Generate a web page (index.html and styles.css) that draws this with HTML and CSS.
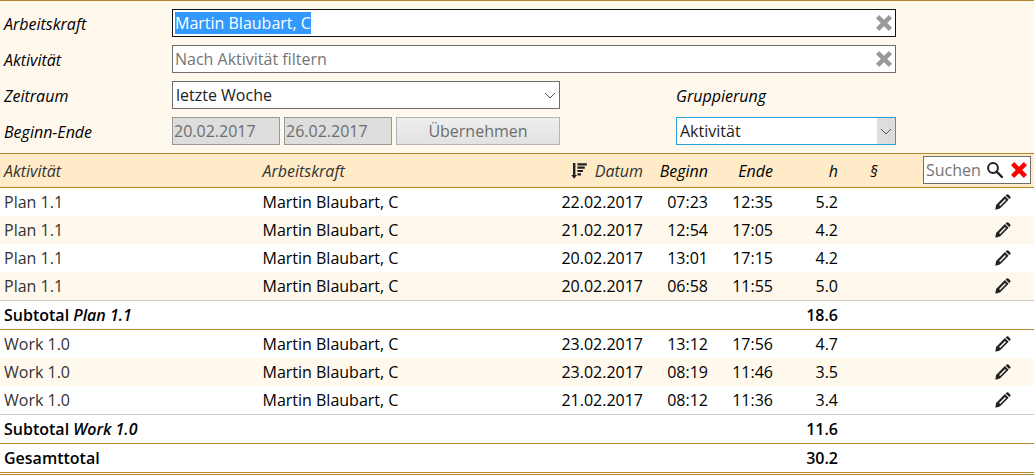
FILE: index.html
```html
<!DOCTYPE html>
<html lang="de">
<head>
<meta charset="utf-8">
<title>Arbeitszeiten</title>
<meta name="viewport" content="width=device-width, initial-scale=1">
<link rel="stylesheet" href="styles.css">
</head>
<body>
<svg class="sprite" aria-hidden="true">
  <symbol id="cross" viewBox="0 0 16 16"><path d="M3.2.2 8 5 12.8.2 15.8 3.2 11 8l4.8 4.8-3 3L8 11l-4.8 4.8-3-3L5 8 .2 3.2z" fill="currentColor" stroke="currentColor" stroke-width=".4" stroke-linejoin="round"/></symbol>
  <symbol id="lens" viewBox="0 0 16 16"><circle cx="6" cy="6" r="4.9" fill="none" stroke="currentColor" stroke-width="2"/><path d="M9.6 9.6 15 15" stroke="currentColor" stroke-width="2.4" stroke-linecap="round"/></symbol>
  <symbol id="sort" viewBox="0 0 16 16"><path d="M2 0h2.4v12H6L3.2 15.8.2 12H2zM6.4.2H15.8v2.2H6.4zM6.4 3.6h7.4v2.2H6.4zM6.4 6.9h5.6v2.2H6.4zM6.4 10.2h3.6v2.2H6.4z" fill="currentColor"/></symbol>
  <symbol id="pencil" viewBox="0 0 16 16"><path fill-rule="evenodd" d="M.3 15.8 1.1 10.9 9.9 2.1 13.6 5.8 4.9 14.6zM4.1 11 5.1 12 11 6.1 10 5.1z" fill="currentColor"/><path d="M10.6 1.4 11.7.5q.9-.6 1.7.1L15.2 2.4q.8.8.1 1.7L14.3 5.1z" fill="currentColor"/></symbol>
</svg>

<form class="filter">
  <label class="filter-label" for="person">Arbeitskraft</label>
  <div class="field field-wide">
    <input class="control" id="person" type="text" value="Martin Blaubart, C">
    <button class="icon-button field-clear" type="button" aria-label="Arbeitskraft leeren"><svg class="icon"><use href="#cross"/></svg></button>
  </div>

  <label class="filter-label" for="activity">Aktivität</label>
  <div class="field field-wide">
    <input class="control" id="activity" type="text" placeholder="Nach Aktivität filtern">
    <button class="icon-button field-clear" type="button" aria-label="Aktivität leeren"><svg class="icon"><use href="#cross"/></svg></button>
  </div>

  <label class="filter-label" for="period">Zeitraum</label>
  <div class="field field-period">
    <select class="control select" id="period"><option>letzte Woche</option></select>
    <svg class="chevron" viewBox="0 0 18 26" aria-hidden="true"><path d="M4 11 9 16 14 11"/></svg>
  </div>
  <label class="filter-label group-column" for="grouping">Gruppierung</label>

  <label class="filter-label" for="begin">Beginn-Ende</label>
  <input class="control" id="begin" type="text" value="20.02.2017" disabled>
  <input class="control" type="text" value="26.02.2017" aria-label="Ende" disabled>
  <button class="control apply" type="submit" disabled>Übernehmen</button>
  <div class="field group-column">
    <select class="control select select-active" id="grouping"><option>Aktivität</option></select>
    <svg class="chevron chevron-active" viewBox="0 0 18 26" aria-hidden="true"><path d="M4 11 9 16 14 11"/></svg>
  </div>
</form>

<table class="times">
  <colgroup>
    <col class="col-activity"><col><col class="col-date"><col class="col-time"><col class="col-time"><col class="col-time"><col class="col-mark"><col class="col-tools">
  </colgroup>
  <thead>
    <tr>
      <th scope="col"><button class="sort-button" type="button">Aktivität</button></th>
      <th scope="col"><button class="sort-button" type="button">Arbeitskraft</button></th>
      <th scope="col" class="number"><button class="sort-button" type="button"><svg class="icon sort-icon"><use href="#sort"/></svg>Datum</button></th>
      <th scope="col" class="number">Beginn</th>
      <th scope="col" class="number">Ende</th>
      <th scope="col" class="number">h</th>
      <th scope="col" class="mark">§</th>
      <th scope="col" class="search-cell">
        <div class="search">
          <input class="search-input" type="text" placeholder="Suchen" aria-label="Suchen">
          <button class="icon-button" type="button" aria-label="Suche starten"><svg class="icon"><use href="#lens"/></svg></button>
          <button class="icon-button search-clear" type="button" aria-label="Suche leeren"><svg class="icon"><use href="#cross"/></svg></button>
        </div>
      </th>
    </tr>
  </thead>
  <tbody>
    <tr><td><a class="activity" href="#">Plan 1.1</a></td><td>Martin Blaubart, C</td><td class="number">22.02.2017</td><td class="number">07:23</td><td class="number">12:35</td><td class="number">5.2</td><td></td><td class="tools"><button class="icon-button" type="button" aria-label="Bearbeiten"><svg class="icon"><use href="#pencil"/></svg></button></td></tr>
    <tr><td><a class="activity" href="#">Plan 1.1</a></td><td>Martin Blaubart, C</td><td class="number">21.02.2017</td><td class="number">12:54</td><td class="number">17:05</td><td class="number">4.2</td><td></td><td class="tools"><button class="icon-button" type="button" aria-label="Bearbeiten"><svg class="icon"><use href="#pencil"/></svg></button></td></tr>
    <tr><td><a class="activity" href="#">Plan 1.1</a></td><td>Martin Blaubart, C</td><td class="number">20.02.2017</td><td class="number">13:01</td><td class="number">17:15</td><td class="number">4.2</td><td></td><td class="tools"><button class="icon-button" type="button" aria-label="Bearbeiten"><svg class="icon"><use href="#pencil"/></svg></button></td></tr>
    <tr><td><a class="activity" href="#">Plan 1.1</a></td><td>Martin Blaubart, C</td><td class="number">20.02.2017</td><td class="number">06:58</td><td class="number">11:55</td><td class="number">5.0</td><td></td><td class="tools"><button class="icon-button" type="button" aria-label="Bearbeiten"><svg class="icon"><use href="#pencil"/></svg></button></td></tr>
    <tr class="subtotal"><td colspan="5">Subtotal <em>Plan 1.1</em></td><td class="number">18.6</td><td colspan="2"></td></tr>
  </tbody>
  <tbody>
    <tr><td><a class="activity" href="#">Work 1.0</a></td><td>Martin Blaubart, C</td><td class="number">23.02.2017</td><td class="number">13:12</td><td class="number">17:56</td><td class="number">4.7</td><td></td><td class="tools"><button class="icon-button" type="button" aria-label="Bearbeiten"><svg class="icon"><use href="#pencil"/></svg></button></td></tr>
    <tr><td><a class="activity" href="#">Work 1.0</a></td><td>Martin Blaubart, C</td><td class="number">23.02.2017</td><td class="number">08:19</td><td class="number">11:46</td><td class="number">3.5</td><td></td><td class="tools"><button class="icon-button" type="button" aria-label="Bearbeiten"><svg class="icon"><use href="#pencil"/></svg></button></td></tr>
    <tr><td><a class="activity" href="#">Work 1.0</a></td><td>Martin Blaubart, C</td><td class="number">21.02.2017</td><td class="number">08:12</td><td class="number">11:36</td><td class="number">3.4</td><td></td><td class="tools"><button class="icon-button" type="button" aria-label="Bearbeiten"><svg class="icon"><use href="#pencil"/></svg></button></td></tr>
    <tr class="subtotal"><td colspan="5">Subtotal <em>Work 1.0</em></td><td class="number">11.6</td><td colspan="2"></td></tr>
  </tbody>
  <tfoot>
    <tr class="total"><td colspan="5">Gesamttotal</td><td class="number">30.2</td><td colspan="2"></td></tr>
  </tfoot>
</table>
<script src="script.js"></script>
</body>
</html>
```

FILE: styles.css
```css
* {
  box-sizing: border-box;
}

body {
  margin: 0;
  background: #fff;
  color: #000;
  font: 16px/22px "Open Sans", "Noto Sans", sans-serif;
}

button,
input,
select {
  margin: 0;
  font: inherit;
}

::selection {
  background: #3399ff;
  color: #fff;
}

.sprite {
  position: absolute;
  width: 0;
  height: 0;
}

.icon {
  display: block;
  width: 16px;
  height: 16px;
}

.icon-button {
  display: block;
  flex: none;
  padding: 0;
  border: 0;
  background: none;
  color: #222;
}

/* Filter form */

.filter {
  display: grid;
  grid-template-columns: 164fr 108fr 108fr 164fr 108fr 220fr 134fr;
  gap: 8px 4px;
  padding: 8px 0 8px 4px;
  border-top: 1px solid #b8862b;
  background: #fff8ec;
}

.filter-label {
  grid-column: 1;
  padding-top: 4px;
  font-style: italic;
}

.field {
  display: grid;
  align-items: center;
}

.field > * {
  grid-area: 1 / 1;
}

.field-wide {
  grid-column: 2 / 7;
}

.field-period {
  grid-column: 2 / 5;
}

.group-column {
  grid-column: 6;
}

.control {
  width: 100%;
  min-width: 0;
  height: 28px;
  padding: 0 2px;
  border: 1px solid #6d6d6d;
  border-radius: 0;
  outline: 0;
  background: #fff;
  color: #222;
}

.control:focus {
  border-color: #111;
}

.control::placeholder,
.search-input::placeholder {
  color: #757575;
  opacity: 1;
}

.control:disabled {
  padding: 0 1px;
  border-color: #999;
  background: #ddd;
  color: #6d6d6d;
}

.apply:disabled {
  border-color: #b5b5b5;
  background: linear-gradient(#eee, #e2e2e2);
}

.select {
  padding: 0 20px 0 3px;
  appearance: none;
}

.select-active {
  border-color: #2a9fd8;
}

.field-clear {
  justify-self: end;
  margin-right: 4px;
  color: #999;
}

.chevron {
  justify-self: end;
  width: 18px;
  height: 26px;
  margin-right: 1px;
  fill: none;
  stroke: #555;
  pointer-events: none;
}

.chevron-active {
  background: #ddd;
}

/* Time table */

.times {
  width: 100%;
  border-collapse: separate;
  border-spacing: 0;
  table-layout: fixed;
}

.col-activity {
  width: 25%;
}

.col-date {
  width: 100px;
}

.col-time {
  width: 65px;
}

.col-mark {
  width: 77px;
}

.col-tools {
  width: 115px;
}

th {
  height: 35px;
  padding: 0 4px;
  border: solid #b8862b;
  border-width: 1px 0;
  background: #ffebc8;
  font-weight: 400;
  font-style: italic;
  text-align: left;
  white-space: nowrap;
}

td {
  height: 28px;
  padding: 0 4px;
}

.number {
  text-align: right;
}

.mark {
  padding-left: 28px;
}

tbody tr:nth-child(even) td {
  background: #fff8ec;
}

.activity {
  color: #333;
  text-decoration: none;
}

.sort-button {
  display: inline-flex;
  align-items: center;
  gap: 8px;
  padding: 0;
  border: 0;
  background: none;
  color: #333;
  vertical-align: middle;
}

.sort-icon {
  color: #222;
}

.tools {
  padding-right: 23px;
}

.tools .icon-button {
  margin-left: auto;
}

.times .subtotal:nth-child(n) td {
  height: 30px;
  border-top: 1px solid #ccc;
  border-bottom: 1px solid #b8862b;
  background: #fff;
  font-weight: 600;
}

.total td {
  height: 31px;
  border-bottom: 3px double #b8862b;
  font-weight: 600;
}

.search-cell {
  padding: 0 3px 1px 4px;
}

.search {
  display: flex;
  align-items: center;
  gap: 4px;
  height: 28px;
  padding: 0 3px 0 2px;
  border: 1px solid #6d6d6d;
  background: #fff;
  font-style: normal;
}

.search-input {
  flex: 1;
  min-width: 0;
  padding: 0;
  border: 0;
  outline: 0;
  background: none;
}

.search-clear {
  margin-left: 4px;
  color: #f00;
}
```

FILE: script.js
```js
document.getElementById("person").select();
```
